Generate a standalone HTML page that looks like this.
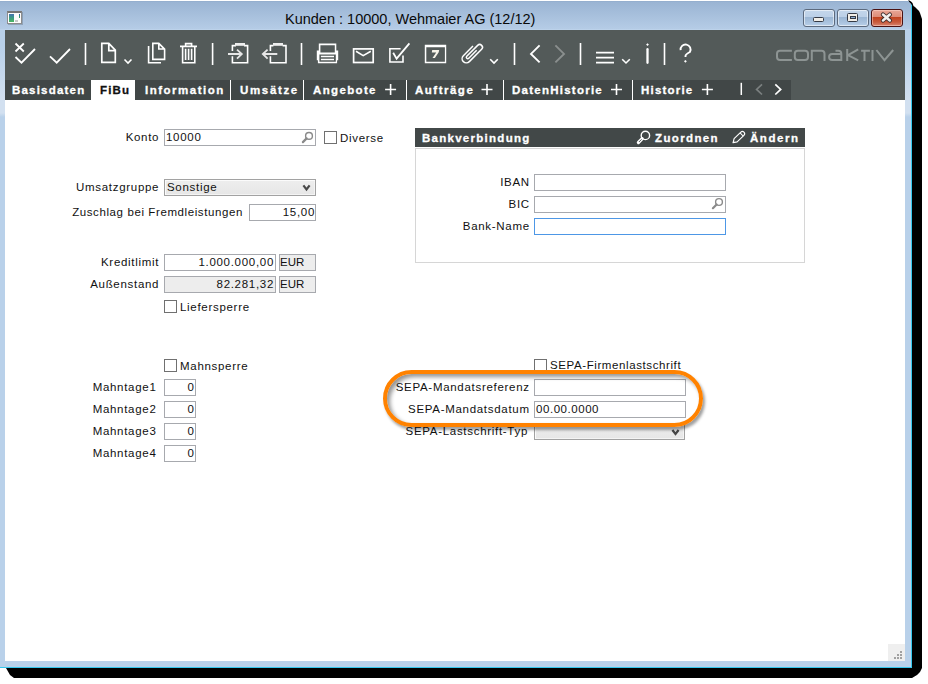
<!DOCTYPE html>
<html><head><meta charset="utf-8">
<style>
*{margin:0;padding:0;box-sizing:border-box}
html,body{width:928px;height:684px;overflow:hidden;background:#fff;position:relative;font-family:"Liberation Sans",sans-serif}
.a{position:absolute}
#shadow{left:0;top:0;width:928px;height:684px;background:#000;clip-path:polygon(908.5px 0,911px 1.5px,912.5px 3px,913.5px 6px,915px 7px,917px 9px,919px 11px,920px 13px,921px 16px,922px 19px,922px 668px,920px 672px,917px 675px,912px 678px,14px 678px,10px 675px,6px 668px,6px 600px,908.5px 600px)}
#win{left:0;top:1px;width:912px;height:667px;background:linear-gradient(#b9d1ea 0,#b9d1ea 45px,#d2e0f0 100px,#d2e0f0 112px,#b9d1ea 116px);border-right:1px solid #35c8ee;border-bottom:1px solid #35c8ee;clip-path:polygon(0 0,908px 0,912px 4px,912px 667px,0 667px)}
#title{left:0;top:1px;width:911px;height:29px;background:linear-gradient(#8fa9c9 0,#9ab4d3 1px,#b5cce6 28px,#c3d8ee 29px);clip-path:polygon(0 0,908px 0,912px 4px,912px 29px,0 29px)}
#tb{left:5px;top:30px;width:900px;height:70px;background:#535a59}
#tabs{left:5px;top:80px;width:786px;height:20px;background:#414747}
#content{left:5px;top:100px;width:900px;height:561px;background:#fff}
.t{position:absolute;font-size:11.5px;letter-spacing:0.7px;color:#111;white-space:nowrap;line-height:14px}
.r{text-align:right}
.tab{position:absolute;top:82px;font-weight:bold;font-size:11.5px;letter-spacing:1.0px;-webkit-text-stroke:0.3px currentColor;color:#fff;white-space:nowrap;line-height:16px}
.sep{position:absolute;top:80px;width:1px;height:20px;background:#fff}
.inp{position:absolute;border:1px solid #a7a9ae;background:#fff;height:17px}
.gr{background:#ededed}
.cb{position:absolute;width:13px;height:13px;border:1px solid #707070;background:#fff}
.wb{border:1px solid #5c6a7e;border-radius:3px;background:linear-gradient(#c3d6eb 0,#bcd0e7 42%,#9ab5d3 43%,#a9c2de 75%,#b8cfe8 100%);box-shadow:inset 0 0 0 1px rgba(255,255,255,0.55)}
.wbc{border:1px solid #4a1212;border-radius:3px;background:linear-gradient(#e9a797 0,#dd8c78 42%,#c0401c 43%,#c85a3c 75%,#d88570 100%);box-shadow:inset 0 0 0 1px rgba(255,220,210,0.5)}
</style></head>
<body>
<div id="shadow" class="a"></div>
<div id="win" class="a"></div>
<div id="title" class="a"></div>
<div id="tb" class="a"></div>
<div id="tabs" class="a"></div>
<div id="content" class="a"></div>
<div class="a" style="left:91px;top:80px;width:44px;height:21px;background:#fff"></div>

<svg class="a" style="left:0;top:0" width="928" height="684" viewBox="0 0 928 684">
<g fill="none" stroke="#fff" stroke-width="1.8" stroke-linecap="butt" stroke-linejoin="miter">
<!-- x-check -->
<path d="M15.5,43.5 L23.8,51.5 M23.8,43.5 L15.5,51.5"/>
<path d="M15.5,57 L21.5,62.7 L35,49"/>
<!-- check -->
<path d="M50,56.3 L56.7,62.7 L70,49"/>
<!-- separators -->
<path d="M85.5,43 V65 M212.6,43 V65 M301.5,43 V65 M514.5,43 V65 M580.5,43 V65 M664.5,43 V65" stroke-width="1.6"/>
<!-- new doc -->
<path d="M101.8,43.4 H108.8 L115.3,50.2 V62.4 H101.8 Z M108.8,43.4 V50.6 H115.3" stroke-width="1.7"/>
<path d="M124.5,59.5 L128,63 L131.5,59.5" stroke-width="1.6"/>
<!-- copy -->
<path d="M148.6,46 V62.8 H161" stroke-width="1.6"/>
<path d="M152.8,43.4 H158.8 L164.6,49.2 V59.4 H152.8 Z M158.8,43.4 V49 H164.6" stroke-width="1.6"/>
<!-- trash -->
<path d="M180,46.4 H197 M185.6,46.4 V43.6 H191.6 V46.4 M182.6,46.4 V62.8 H194.8 V46.4 M185.6,48.8 V60 M188.6,48.8 V60 M191.6,48.8 V60" stroke-width="1.6"/>
<!-- import -->
<path d="M236,45.6 H232.4 V51 M232.4,56.2 V62.8 H247.6 V45.6 H244" stroke-width="1.6"/>
<rect x="235" y="43" width="10" height="2.8" fill="#eee" stroke="none"/>
<path d="M228,54 H242 M237,49.6 L241.8,54 L237,58.6" stroke="#e6e6e6" stroke-width="1.8"/>
<!-- export -->
<path d="M273.4,45.6 H270.4 V51 M270.4,56.2 V62.8 H286 V45.6 H282.6" stroke-width="1.6"/>
<rect x="273" y="43" width="10" height="2.8" fill="#eee" stroke="none"/>
<path d="M262.6,54 H277.3 M267.6,49.6 L262.8,54 L267.6,58.6" stroke="#e6e6e6" stroke-width="1.8"/>
<!-- printer -->
<path fill="#fff" stroke="none" fill-rule="evenodd" d="M318.8,43.6 H336.3 V50.6 H338.2 V60.2 H337.1 V63.2 H317.9 V60.2 H316.8 V50.6 H318.8 Z M320.4,45.3 H334.8 V52.5 H320.4 Z M319.4,54.4 H335.8 V61.7 H319.4 Z"/>
<path fill="#fff" stroke="none" d="M320.9,55.8 H334 V57.2 H320.9 Z M320.9,58.8 H334 V60.2 H320.9 Z"/>
<!-- envelope -->
<rect x="353.6" y="48.9" width="19.6" height="13.6" stroke-width="1.7"/>
<path d="M356,51.2 L363.2,55.6 L370.8,51.2" stroke-width="1.6"/>
<!-- task -->
<path d="M400.6,48.8 H389.9 V62 H403 V55.4" stroke-width="1.6"/>
<path d="M393.2,52.8 L396.6,58.6 L409.4,43.4" stroke-width="1.8"/>
<!-- calendar -->
<path fill="#fff" stroke="none" fill-rule="evenodd" d="M424.8,44.8 H446.2 V63.2 H424.8 Z M426.3,47.2 H444.9 V61.7 H426.3 Z"/>
<path fill="#f7f3e8" stroke="none" d="M432.2,50.1 H439.2 L438.7,52.2 L434.9,57.9 H432.5 L436.2,52.4 H431.8 Z"/>
<!-- paperclip -->
<path transform="translate(472,53) rotate(-45)" d="M5.6,-4.2 H-8 A4.2,4.2 0 0 0 -8,4.2 H9.4 A2.8,2.8 0 0 0 9.4,-1.4 H-6 A1.4,1.4 0 0 0 -6,1.4 H5.2" stroke-width="1.5"/>
<!-- chevrons -->
<path d="M490.2,59.2 L494,63 L497.8,59.2" stroke-width="1.6"/>
<path d="M539.6,45.4 L531,53.9 L539.6,62.4" stroke-width="1.9"/>
<path d="M555.4,45.4 L564,53.9 L555.4,62.4" stroke="#8a8f8e" stroke-width="1.9"/>
<!-- menu -->
<path d="M596,52.6 H614 M596,57.7 H614 M596,62.6 H614" stroke-width="1.8"/>
<path d="M622.2,59.3 L626,63 L629.8,59.3" stroke-width="1.6"/>
<!-- info -->
<path d="M647.5,49.2 V62.8" stroke-width="2.3" stroke-linecap="round"/>
<path d="M647.5,43.2 L648.9,44.6 L647.5,46 L646.1,44.6 Z" fill="#fff" stroke="none"/>
<!-- help -->
<path d="M680.6,50.2 A5,5 0 1 1 689.9,52 Q685.6,54.2 685.5,56 V57" stroke-width="1.9"/>
<path d="M685.4,59.9 L686.8,61.3 L685.4,62.7 L684,61.3 Z" fill="#fff" stroke="none"/>
</g>
</svg>

<!-- title bar -->
<div class="a" style="left:285px;top:8.6px;font-size:14.5px;line-height:20px;color:#0a0a0a;white-space:nowrap">Kunden : 10000, Wehmaier AG (12/12)</div>

<!-- tabs -->
<div class="tab" style="left:12px;letter-spacing:1.2px">Basisdaten</div>
<div class="tab" style="left:100px;color:#111;letter-spacing:1.2px">FiBu</div>
<div class="tab" style="left:145px;letter-spacing:1.5px">Information</div>
<div class="sep" style="left:230px"></div>
<div class="tab" style="left:240px;letter-spacing:1.65px">Umsätze</div>
<div class="sep" style="left:303px"></div>
<div class="tab" style="left:313px;letter-spacing:1.35px">Angebote</div>
<div class="sep" style="left:406px"></div>
<div class="tab" style="left:415px;letter-spacing:1.5px">Aufträge</div>
<div class="sep" style="left:503px"></div>
<div class="tab" style="left:512px;letter-spacing:1.25px">DatenHistorie</div>
<div class="sep" style="left:632px"></div>
<div class="tab" style="left:641px;letter-spacing:1.2px">Historie</div>

<!-- left form -->
<div class="t r" style="left:0;width:159.2px;top:130px">Konto</div>
<div class="inp" style="left:164px;top:129px;width:152px"></div>
<div class="t" style="left:166px;top:130px">10000</div>
<div class="cb" style="left:324px;top:131px"></div>
<div class="t" style="left:340px;top:131px">Diverse</div>

<div class="t r" style="left:0;width:159.2px;top:180px">Umsatzgruppe</div>
<div class="inp" style="left:164px;top:179px;width:152px;border-color:#a2a2a2;background:linear-gradient(#eeeeee,#e6e6e6);box-shadow:inset 1px 1px 0 #fbfbfb,inset -1px -1px 0 #f4f4f4"></div>
<div class="t" style="left:167px;top:180px">Sonstige</div>

<div class="t r" style="left:0;width:243px;top:205px;letter-spacing:0.6px">Zuschlag bei Fremdleistungen</div>
<div class="inp" style="left:249px;top:204px;width:67px"></div>
<div class="t r" style="left:249px;width:66px;top:205px">15,00</div>

<div class="t r" style="left:0;width:159.2px;top:255px">Kreditlimit</div>
<div class="inp" style="left:164px;top:254px;width:112px"></div>
<div class="t r" style="left:164px;width:110px;top:255px">1.000.000,00</div>
<div class="inp gr" style="left:279px;top:254px;width:37px"></div>
<div class="t" style="left:280px;top:255px;letter-spacing:0">EUR</div>

<div class="t r" style="left:0;width:159.2px;top:277px">Außenstand</div>
<div class="inp gr" style="left:164px;top:276px;width:112px"></div>
<div class="t r" style="left:164px;width:110px;top:277px">82.281,32</div>
<div class="inp gr" style="left:279px;top:276px;width:37px"></div>
<div class="t" style="left:280px;top:277px;letter-spacing:0">EUR</div>

<div class="cb" style="left:164px;top:300px"></div>
<div class="t" style="left:180px;top:300px">Liefersperre</div>

<div class="cb" style="left:164px;top:359px"></div>
<div class="t" style="left:180px;top:359px">Mahnsperre</div>

<div class="t r" style="left:0;width:156.5px;top:380px">Mahntage1</div>
<div class="inp" style="left:164px;top:379px;width:32px"></div>
<div class="t r" style="left:164px;width:30.5px;top:380px">0</div>
<div class="t r" style="left:0;width:156.5px;top:402px">Mahntage2</div>
<div class="inp" style="left:164px;top:401px;width:32px"></div>
<div class="t r" style="left:164px;width:30.5px;top:402px">0</div>
<div class="t r" style="left:0;width:156.5px;top:424px">Mahntage3</div>
<div class="inp" style="left:164px;top:423px;width:32px"></div>
<div class="t r" style="left:164px;width:30.5px;top:424px">0</div>
<div class="t r" style="left:0;width:156.5px;top:446px">Mahntage4</div>
<div class="inp" style="left:164px;top:445px;width:32px"></div>
<div class="t r" style="left:164px;width:30.5px;top:446px">0</div>

<!-- bank panel -->
<div class="a" style="left:415px;top:128px;width:390px;height:19px;background:#424848"></div>
<div class="a" style="left:415px;top:148px;width:390px;height:115px;border:1px solid #d6d6d6"></div>
<div class="tab" style="left:422px;top:130px;letter-spacing:1.27px">Bankverbindung</div>
<div class="tab" style="left:655px;top:130px;letter-spacing:1.37px">Zuordnen</div>
<div class="tab" style="left:750px;top:130px;letter-spacing:1.54px">Ändern</div>

<div class="t r" style="left:400px;width:129.8px;top:175px">IBAN</div>
<div class="inp" style="left:534px;top:174px;width:192px"></div>
<div class="t r" style="left:400px;width:129.8px;top:197px">BIC</div>
<div class="inp" style="left:534px;top:196px;width:192px"></div>
<div class="t r" style="left:400px;width:129.8px;top:219px">Bank-Name</div>
<div class="inp" style="left:534px;top:218px;width:192px;border-color:#4d97e6"></div>

<!-- SEPA -->
<div class="cb" style="left:534px;top:359px"></div>
<div class="t" style="left:550px;top:358px;letter-spacing:0.6px">SEPA-Firmenlastschrift</div>
<div class="t r" style="left:300px;width:229.7px;top:380px">SEPA-Mandatsreferenz</div>
<div class="inp" style="left:534px;top:379px;width:152px"></div>
<div class="t r" style="left:300px;width:229.7px;top:402px">SEPA-Mandatsdatum</div>
<div class="inp" style="left:534px;top:401px;width:152px"></div>
<div class="t" style="left:536px;top:402px;letter-spacing:0.55px">00.00.0000</div>
<div class="t r" style="left:300px;width:228px;top:424px">SEPA-Lastschrift-Typ</div>
<div class="inp" style="left:534px;top:423px;width:151px;border-color:#a2a2a2;background:linear-gradient(#eeeeee,#e6e6e6);box-shadow:inset 1px 1px 0 #fbfbfb,inset -1px -1px 0 #f4f4f4"></div>


<!-- tab bar extras -->
<svg class="a" style="left:0;top:0" width="928" height="684" viewBox="0 0 928 684">
<g fill="none" stroke="#fff" stroke-width="1.6">
<path d="M385.1,89.5 H396.1 M390.6,84 V95 M481.5,89.5 H492.5 M487,84 V95 M611,89.5 H622 M616.5,84 V95 M701.9,89.5 H712.9 M707.4,84 V95"/>
<path d="M741.3,82.8 V95" stroke-width="1.5"/>
<path d="M762,84.4 L756.6,89.4 L762,94.5" stroke="#7b8080" stroke-width="1.7"/>
<path d="M775.3,84.4 L780.7,89.4 L775.3,94.5" stroke-width="1.7"/>
</g>
<!-- logo -->
<g fill="none" stroke="#8d9493" stroke-width="2">
<path d="M791.9,50.8 H780 Q777,50.8 777,53.8 V57 Q777,60 780,60 H791.9"/>
<rect x="794.8" y="50.8" width="13.2" height="9.2" rx="3"/>
<path d="M811.8,61.1 V50.8 H821.5 Q824.5,50.8 824.5,53.8 V61.1"/>
<path d="M835.5,50.8 H838.3 Q841.3,50.8 841.3,53.8 V60 H832.1 Q829.1,60 829.1,57 Q829.1,54 832.1,54 H841.3"/>
<path d="M847.2,48.9 V61.1 M848,55.2 L858.2,49.4 M848,55.2 L858.2,60.4"/>
<path d="M861.1,50.8 H869.9 M864.5,50.8 V61 M872.5,50 V61 M876.4,50 L884.5,60.2 L893.2,50"/>
</g>
<!-- bank header icons -->
<g fill="none" stroke="#fff">
<circle cx="645.4" cy="135.4" r="4.2" stroke-width="1.4"/>
<path d="M642.2,138.7 L638.4,142.5" stroke-width="3.2" stroke-linecap="round"/>
<path d="M641.6,139.3 L638.9,142" stroke="#434949" stroke-width="0.9"/>
<g transform="translate(732.6,143.2) rotate(-44)">
<path d="M0.6,0 L4.2,-2.2 H13.6 A2.2,2.2 0 0 1 13.6,2.2 H4.2 Z" stroke-width="1.15" stroke-linejoin="round"/>
<path d="M12.6,-2.2 V2.2" stroke-width="1"/>
<path d="M0.3,0 L2.4,-1.2 V1.2 Z" fill="#fff" stroke="none"/>
</g>
</g>
<!-- input search icons -->
<g fill="none" stroke="#8a8a8a">
<circle cx="309" cy="135.9" r="3.4" stroke-width="1.4"/>
<path d="M306.6,138.4 L302.9,142.1" stroke-width="2.2" stroke-linecap="round"/>
<circle cx="719" cy="202" r="3.4" stroke-width="1.4"/>
<path d="M716.6,204.5 L712.9,208.2" stroke-width="2.2" stroke-linecap="round"/>
</g>
<!-- select arrows -->
<g fill="none" stroke="#474747" stroke-width="2.2">
<path d="M303.4,185.4 L306.5,189.4 L309.6,185.4"/>
<path d="M672.4,430 L675.5,434 L678.6,430"/>
</g>
</svg>

<!-- window icon -->
<div class="a" style="left:7px;top:11px;width:15px;height:13px;background:#fdfdfd;border:1px solid #8c8c8c;border-top:2px solid #767676;box-shadow:1px 1px 0 rgba(0,0,0,0.18)"></div>
<div class="a" style="left:8.5px;top:14px;width:5.5px;height:7.5px;background:linear-gradient(#4673b4,#3b9a86 45%,#4cb662)"></div>
<div class="a" style="left:19px;top:14px;width:1.2px;height:4px;background:linear-gradient(#3060b0,#40b050)"></div>
<div class="a" style="left:15px;top:20px;width:2.7px;height:1.6px;background:#c8c8c8"></div>

<!-- window buttons -->
<div class="a wb" style="left:803px;top:9px;width:32px;height:18px"></div>
<div class="a wb" style="left:837px;top:9px;width:32px;height:18px"></div>
<div class="a wbc" style="left:871px;top:9px;width:32px;height:18px"></div>
<div class="a" style="left:813px;top:17px;width:11px;height:5px;border:1px solid #353a45;border-radius:1.5px;background:#f1eee8"></div>
<div class="a" style="left:847px;top:13px;width:11px;height:9px;border:1.5px solid #353a45;border-radius:1.5px;background:#f1eee8"></div>
<div class="a" style="left:849.5px;top:15.8px;width:6px;height:3.4px;border:1px solid #353a45;background:#8fb0d5"></div>
<svg class="a" style="left:0;top:0" width="928" height="40" viewBox="0 0 928 40">
<path d="M883,14.6 L889.8,20.4 M889.8,14.6 L883,20.4" stroke="#3b2b2b" stroke-width="4.4" stroke-linecap="round"/>
<path d="M883,14.6 L889.8,20.4 M889.8,14.6 L883,20.4" stroke="#f2f0ee" stroke-width="2.6" stroke-linecap="round"/>
</svg>

<!-- orange ring -->
<div class="a" style="left:382.5px;top:370px;width:320px;height:57px;border:4.5px solid #ff8200;border-radius:28.5px;box-shadow:2px 3px 3px rgba(0,0,0,0.38), inset 3px 3px 4px rgba(0,0,0,0.42)"></div>

<!-- resize grip -->
<div class="a" style="left:888px;top:644px;width:17px;height:17px;background:#efefef"></div>
<svg class="a" style="left:0;top:0" width="928" height="684" viewBox="0 0 928 684">
<g fill="#a0a0a0"><rect x="900" y="651" width="2" height="2"/><rect x="897" y="654" width="2" height="2"/><rect x="900" y="654" width="2" height="2"/><rect x="894" y="657" width="2" height="2"/><rect x="897" y="657" width="2" height="2"/><rect x="900" y="657" width="2" height="2"/></g>
</svg>
</body></html>
